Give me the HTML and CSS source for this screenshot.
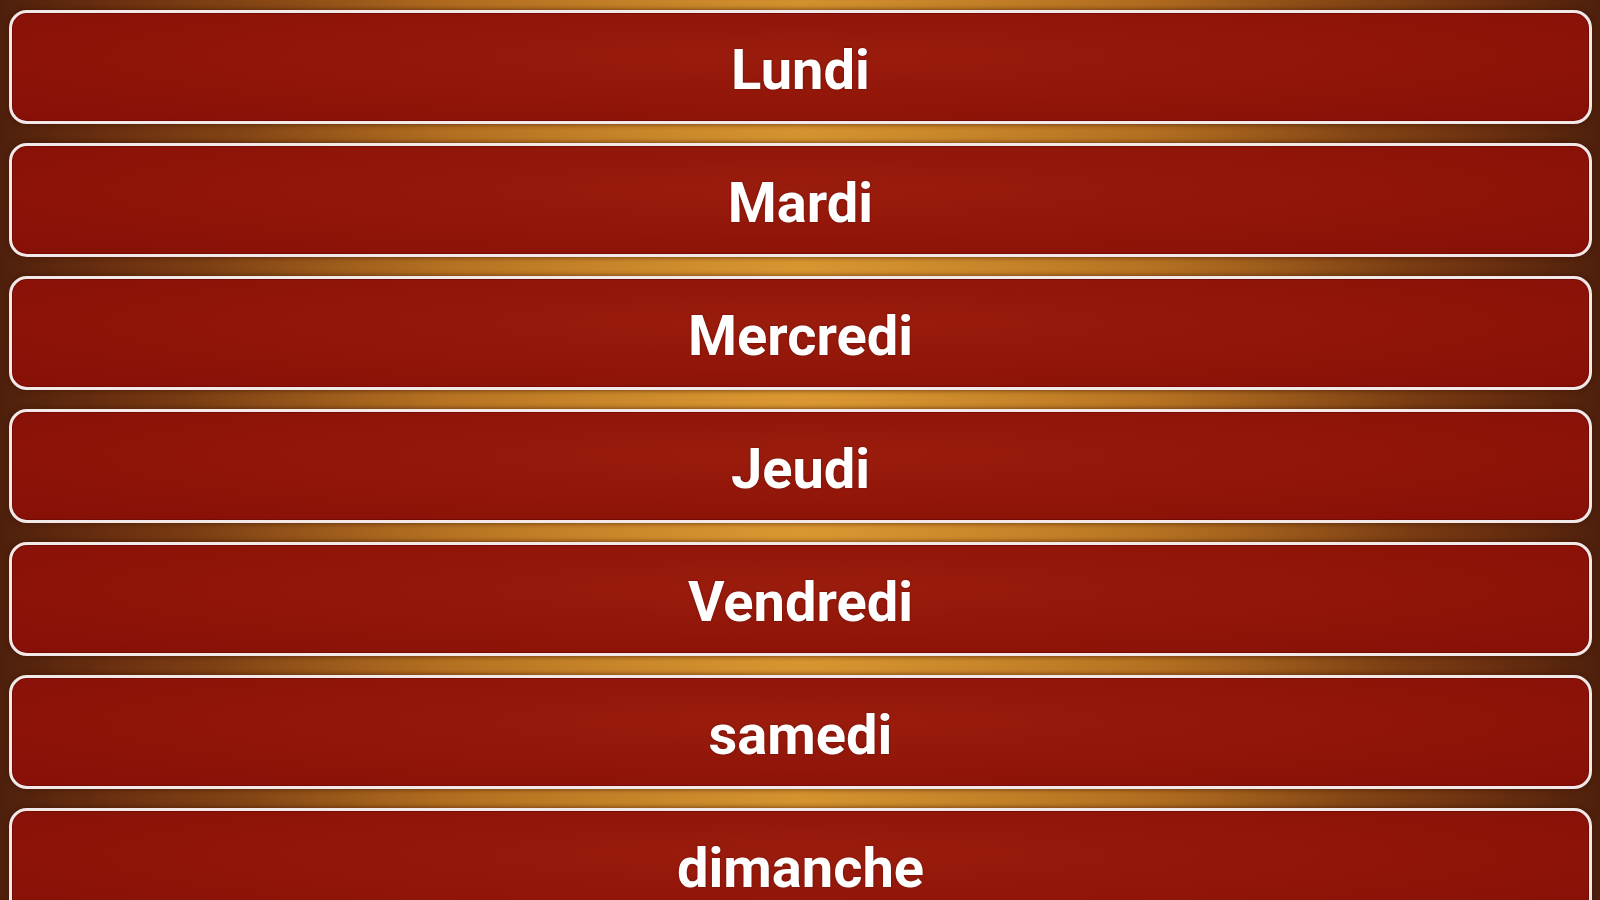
FILE: index.html
```html
<!DOCTYPE html>
<html lang="fr">
<head>
<meta charset="utf-8">
<title>Jours</title>
<link rel="stylesheet" href="styles.css">
</head>
<body>
<main class="list">
  <button class="day">Lundi</button>
  <button class="day">Mardi</button>
  <button class="day">Mercredi</button>
  <button class="day">Jeudi</button>
  <button class="day">Vendredi</button>
  <button class="day">samedi</button>
  <button class="day">dimanche</button>
</main>
</body>
</html>
```

FILE: styles.css
```css
html, body {
  margin: 0;
  height: 100%;
  overflow: hidden;
}
body {
  background:
    radial-gradient(ellipse 55% 120% at 50% 50%, rgba(235,165,55,0.5), rgba(235,165,55,0) 70%),
    linear-gradient(90deg, #4e200c 0%, #6e3210 8%, #a8651c 28%, #cc8c2c 50%, #a8651c 72%, #6e3210 92%, #4e200c 100%);
  font-family: Roboto, "Liberation Sans", sans-serif;
}
.list {
  display: flex;
  flex-direction: column;
  gap: 19px;
  padding: 10px 8px 0 9px;
}
.day {
  flex: 0 0 auto;
  height: 114px;
  border: 3px solid #f3e8e8;
  border-radius: 18px;
  background: radial-gradient(ellipse 70% 90% at 50% 40%, #9a1c0d 0%, #901508 55%, #850f07 100%);
  box-shadow: inset 0 0 0 1px #760b05, 0 0 4px 1px rgba(60,20,5,0.55);
  color: #fff;
  font-family: Roboto, "Liberation Sans", sans-serif;
  font-weight: 700;
  font-size: 56px;
  line-height: 1;
  padding: 6px 0 0;
  text-shadow: 0 0 2px rgba(70,0,0,0.6);
  cursor: pointer;
}
```
